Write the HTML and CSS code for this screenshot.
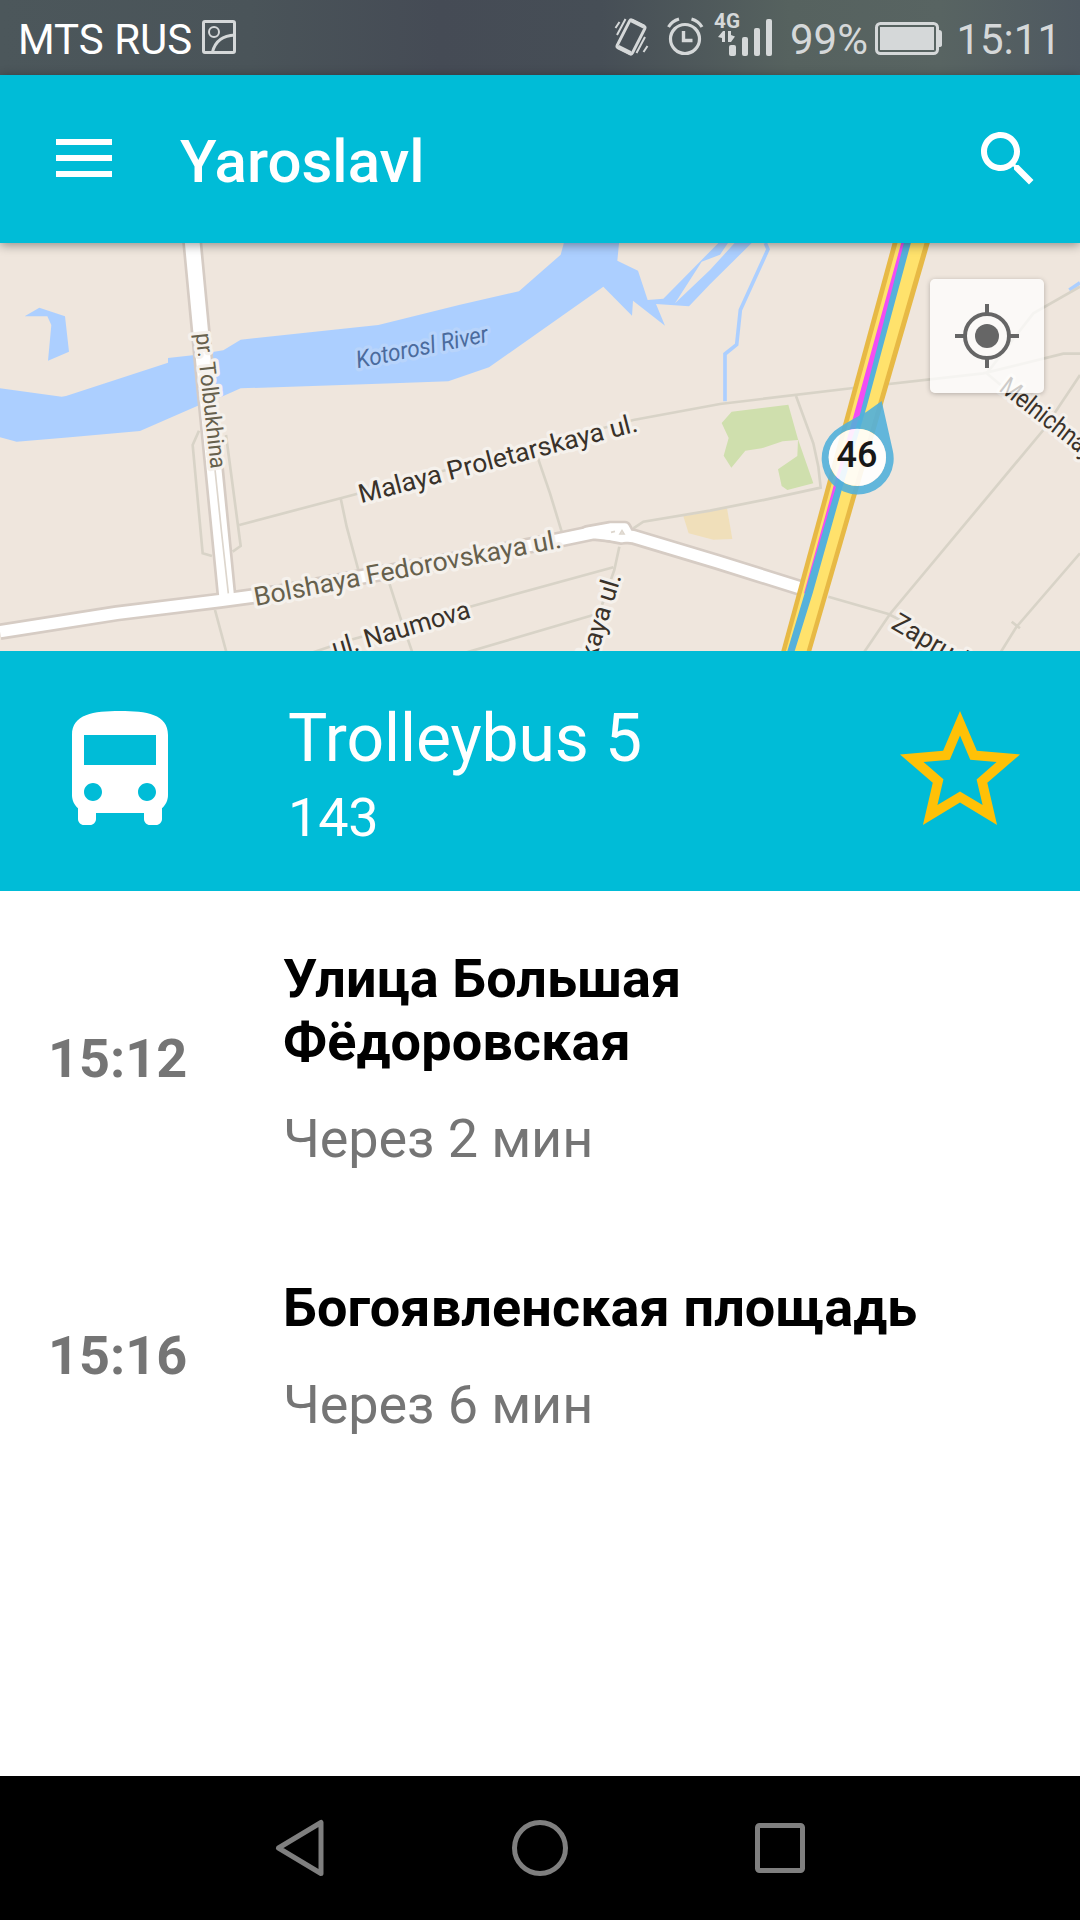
FILE: index.html
```html
<!DOCTYPE html>
<html lang="ru">
<head>
<meta charset="utf-8">
<title>Yaroslavl</title>
<link rel="stylesheet" href="styles.css">
</head>
<body>
<div class="status-bar">
  <span class="carrier">MTS RUS</span>
  <svg class="picture-icon" width="34" height="34" viewBox="0 0 34 34" fill="none" stroke="currentColor">
    <rect x="1.500" y="1.500" width="31" height="31" rx="1.500" stroke-width="3"/>
    <circle cx="12" cy="12" r="5" stroke-width="2"/>
    <path d="M10.500 32C13 22 20 15.500 33 15" stroke-width="3"/>
  </svg>
  <svg class="status-icons" width="176" height="75" viewBox="0 0 176 75" fill="none" stroke="currentColor">
    <g transform="rotate(27 17 37)">
      <rect x="8.500" y="21.500" width="17" height="31" rx="2" stroke-width="3"/>
      <path d="M10 22h14M10 51.500h14" stroke-width="4"/>
    </g>
    <path d="M11.500 19 3 35M5.500 22l-4 6M31 37l-8.500 16M33.500 46l-4 6" stroke-width="2"/>
    <circle cx="71" cy="39" r="14.500" stroke-width="3.200"/>
    <path d="M69.500 31v9.500h9" stroke-width="3.400"/>
    <path d="M54.500 27Q58 21 65 19M77.500 19Q84.500 21 88 27" stroke-width="3.200"/>
    <g fill="currentColor" stroke="none">
      <text class="network" x="100" y="28" textLength="26" lengthAdjust="spacingAndGlyphs">4G</text>
      <path d="M104 37l5-6h2v11h-3v-4zM114 31h3v4l4 1.500-4 5.500h-3z"/>
      <rect x="115" y="45" width="7" height="11" rx="2"/>
      <rect x="128" y="37" width="6" height="19" rx="2"/>
      <rect x="140" y="28" width="6" height="28" rx="2"/>
      <rect x="152" y="19" width="6" height="37" rx="2"/>
    </g>
  </svg>
  <span class="battery-level">99%</span>
  <svg class="battery-icon" width="68" height="34" viewBox="0 0 68 34">
    <rect x="1.500" y="1.500" width="61" height="30" rx="4" fill="none" stroke="currentColor" stroke-width="3"/>
    <path d="M5 5h54v23H5zM64 8q3 0 3 3v12q0 2-3 2z" fill="currentColor"/>
  </svg>
  <span class="clock">15:11</span>
</div>

<header class="app-bar">
  <svg class="menu-icon" width="56" height="38" viewBox="0 0 56 38"><path d="M0 0h56v6H0zM0 16h56v6H0zM0 32h56v6H0z" fill="#fff"/></svg>
  <h1 class="app-title">Yaroslavl</h1>
  <svg class="search-icon" width="72" height="72" viewBox="0 0 24 24"><path fill="#fff" d="M15.500 14h-.79l-.28-.27C15.410 12.590 16 11.110 16 9.500 16 5.910 13.090 3 9.500 3S3 5.910 3 9.500 5.910 16 9.500 16c1.610 0 3.090-.59 4.230-1.570l.27.28v.79l5 4.990L20.490 19l-4.990-5zm-6 0C7.010 14 5 11.990 5 9.500S7.010 5 9.500 5 14 7.010 14 9.500 11.990 14 9.500 14z"/></svg>
</header>

<main>
<section class="map">
  <svg class="map-canvas" viewBox="0 9 3240 1224" width="1080" height="408">
    <!-- water -->
    <g class="water">
      <path d="M0 445 185 470 198 468 504 368V354L578 346 670 331 722 299 1050 264 1135 255 1380 194 1557 154 1682 44 1694 0H1858L1852 62 1914 92 1943 180 1990 176 2164 0H2264L2130 133 2067 199 1968 192 1995 257 1899 182 1896 227 1810 140 1467 382 1345 424 1180 430 722 445 670 468 590 499 420 573 210 592 50 605 0 592Z"/>
      <path d="M74 229 118 203 195 229 207 335 144 362 154 255 142 229Z"/>
    </g>
    <path class="land" d="M2025 190 2105 65 2160 44 2190 0H2212L2130 90Z"/>
    <path class="stream" d="M2296 9 2304 28 2221 210 2210 314 2175 342V484"/>
    <path class="stream" d="M3208 150 3240 128"/>
    <!-- parks and buildings -->
    <path class="park" d="M2195 515 2365 494 2394 598 2440 730 2362 750 2345 738 2334 688 2392 648 2394 600 2348 604 2285 625 2236 632 2194 683 2171 647 2186 594 2165 549Z"/>
    <path class="building" d="M2050 829 2181 805 2197 897 2140 899 2066 880Z"/>
    <!-- side streets -->
    <g class="street">
      <path d="M597 572 578 615 608 940 636 948M678 585 722 918 698 935M718 855 1050 767 1900 540 2160 492 2560 444 2950 400 3190 341H3240"/>
      <path d="M1022 775 1040 860 1075 990M1614 655 1650 760 1685 875M645 1110 680 1240M1168 1030 1200 1130 1238 1240"/>
      <path d="M930 1240 1050 1200 1410 1100 1840 982M1390 1240 1780 1125M1858 920 1843 990 1790 1140"/>
      <path d="M2388 468 2440 610 2455 680 2462 743 2300 778 2130 812 1930 845 1900 865"/>
      <path d="M2485 1070 2665 1122 2740 1160M2590 1240 2670 1122 3130 570 3240 405M3000 1240 3050 1160 3240 940M3035 1145 3060 1165"/>
      <path d="M2960 400 3100 220 3240 140M2960 400 3020 450 3240 600"/>
    </g>
    <!-- main streets -->
    <g class="avenue-edge">
      <path d="M0 1175 350 1120 660 1082 820 1060 1650 905 1780 878 1900 890 2150 965 2415 1048"/>
      <path class="wide" d="M576 0 612 380 681 1080"/>
      <path class="narrow" d="M1760 875 1830 862H1875L1890 890 1865 895Z"/>
    </g>
    <g class="avenue">
      <path d="M0 1175 350 1120 660 1082 820 1060 1650 905 1780 878 1900 890 2150 965 2415 1048"/>
      <path class="wide" d="M576 0 612 380 681 1080"/>
      <path class="narrow" d="M1760 875 1830 862H1875L1890 890 1865 895Z"/>
    </g>
    <path class="median" d="M642 660 665 880 685 1060M1833 877l12-3M1860 882l6-10 6 10z"/>
    <!-- highway with route lines -->
    <path fill="#e7b945" d="M2680 0H2792L2432 1240H2342Z"/>
    <path fill="#ffe26c" d="M2695 0H2776L2418 1240H2356Z"/>
    <path fill="#f34df3" d="M2706 0H2718L2585 520 2418 1060H2412L2500 740 2560 530Z"/>
    <path fill="#55b1db" d="M2714 0H2735L2600 500 2528 740 2438 1060 2382 1240H2360L2414 1060 2508 740 2578 530Z"/>
    <!-- labels -->
    <g class="labels">
      <text class="muted" font-size="68" transform="translate(587 281) rotate(83.600)" textLength="409" lengthAdjust="spacingAndGlyphs">pr. Tolbukhina</text>
      <text class="muted" transform="translate(767 1098) rotate(-10.800)" textLength="937" lengthAdjust="spacingAndGlyphs">Bolshaya Fedorovskaya ul.</text>
      <text transform="translate(1083 790) rotate(-14.600)" textLength="862" lengthAdjust="spacingAndGlyphs">Malaya Proletarskaya ul.</text>
      <text transform="translate(1004 1252) rotate(-16.200)" textLength="429" lengthAdjust="spacingAndGlyphs">ul. Naumova</text>
      <text transform="translate(1787 1262) rotate(-73)" textLength="264" lengthAdjust="spacingAndGlyphs">kaya ul.</text>
      <text class="river" transform="translate(1073 385) rotate(-11.500)" textLength="403" lengthAdjust="spacingAndGlyphs">Kotorosl River</text>
      <text transform="translate(2994 450) rotate(38)" textLength="462" lengthAdjust="spacingAndGlyphs">Melnichnaya ul.</text>
      <text transform="translate(2670 1163) rotate(30)">Zaprudnaya ul.</text>
    </g>
    <!-- vehicle marker -->
    <path fill="#52b0da" fill-opacity=".9" fill-rule="evenodd" d="M2645 483 2678 630A108 108 0 1 1 2519 562Q2535 550 2600 515ZM2572 566a86 86 0 1 0 .1 0z"/>
    <circle cx="2572" cy="652" r="86" fill="#fff" fill-opacity=".9"/>
    <text class="marker-label" x="2571" y="682">46</text>
  </svg>
  <button class="locate" aria-label="Locate">
    <svg width="64" height="64" viewBox="0 0 64 64"><g fill="none" stroke="#666" stroke-width="4"><circle cx="32" cy="32" r="22"/><path d="M32 0v9M32 55v9M0 32h9M55 32h9"/></g><circle cx="32" cy="32" r="12" fill="#666"/></svg>
  </button>
</section>

<section class="vehicle">
  <svg width="144" height="144" viewBox="0 0 24 24"><path fill="#fff" d="M4 16c0 .88.39 1.670 1 2.220V20c0 .55.45 1 1 1h1c.55 0 1-.45 1-1v-1h8v1c0 .55.45 1 1 1h1c.55 0 1-.45 1-1v-1.780c.61-.55 1-1.340 1-2.220V6c0-3.500-3.580-4-8-4s-8 .5-8 4v10zm3.500 1c-.83 0-1.500-.67-1.500-1.500S6.670 14 7.500 14s1.500.67 1.500 1.500S8.330 17 7.500 17zm9 0c-.83 0-1.500-.67-1.500-1.500s.67-1.500 1.500-1.500 1.500.67 1.500 1.500-.67 1.500-1.500 1.500zm1.500-6H6V6h12v5z"/></svg>
  <div class="vehicle-text">
    <div class="route">Trolleybus 5</div>
    <div class="number">143</div>
  </div>
  <svg width="144" height="144" viewBox="0 0 24 24"><path fill="#ffc107" d="M22 9.240l-7.190-.62L12 2 9.190 8.630 2 9.240l5.460 4.730L5.820 21 12 17.270 18.180 21l-1.630-7.030L22 9.240zM12 15.400l-3.760 2.270 1-4.280-3.320-2.880 4.380-.38L12 6.100l1.710 4.040 4.380.38-3.320 2.880 1 4.280L12 15.400z"/></svg>
</section>

<ul class="stops">
  <li class="stop">
    <time class="stop-time">15:12</time>
    <div class="stop-text">
      <div class="stop-name">Улица Большая Фёдоровская</div>
      <div class="stop-eta">Через 2 мин</div>
    </div>
  </li>
  <li class="stop">
    <time class="stop-time">15:16</time>
    <div class="stop-text">
      <div class="stop-name">Богоявленская площадь</div>
      <div class="stop-eta">Через 6 мин</div>
    </div>
  </li>
</ul>
</main>

<nav class="nav-bar">
  <svg width="50" height="64" viewBox="0 0 50 64"><path d="M46 6.500v51L3.500 32Z"/></svg>
  <svg width="58" height="64" viewBox="0 0 58 64"><circle cx="29" cy="32" r="25.500"/></svg>
  <svg width="50" height="64" viewBox="0 0 50 64"><rect x="2.500" y="9.500" width="45" height="45" rx="2"/></svg>
</nav>
</body>
</html>
```

FILE: styles.css
```css
* { box-sizing: border-box; }

body {
  margin: 0;
  width: 1080px;
  height: 1920px;
  display: flex;
  flex-direction: column;
  overflow: hidden;
  background: #fff;
  font-family: Roboto, sans-serif;
}

svg { display: block; flex: none; }

.status-bar {
  height: 75px;
  flex: none;
  display: flex;
  align-items: center;
  padding: 0 19px 0 18px;
  background: linear-gradient(90deg, #4c575b 0, #4a5459 250px, #454b55 440px, #464e56 600px, #56625f 790px, #586462 940px, #4f5961 1080px);
  color: #d5d8d9;
  font-size: 42px;
  white-space: nowrap;
}

.carrier { flex: none; width: 184px; color: #fff; padding-top: 3px; }
.picture-icon { margin: 0 378px 1px 0; }
.network { font-size: 20px; font-weight: 700; }
.battery-level { flex: none; width: 85px; padding-top: 3px; }
.battery-icon { margin-top: 2px; }
.clock { margin-left: auto; padding-top: 3px; }

.app-bar {
  position: relative;
  z-index: 1;
  height: 168px;
  flex: none;
  display: flex;
  align-items: center;
  padding: 0 36px 0 56px;
  background: #00bcd7;
  box-shadow: 0 2px 10px rgba(0, 0, 0, .4);
}

.menu-icon { margin-bottom: 2px; }

.app-title {
  margin: 4px 0 0 68px;
  color: #fff;
  font-size: 60px;
  font-weight: 500;
}

.search-icon { margin-left: auto; }

main {
  flex: 1;
  display: flex;
  flex-direction: column;
}

.map {
  position: relative;
  height: 408px;
  flex: none;
  overflow: hidden;
  background: #efe6dd;
}

.water { fill: #accfff; }
.land { fill: #efe6dd; }
.stream { fill: none; stroke: #accfff; stroke-width: 11; }
.park { fill: #cfdfad; }
.building { fill: #f0dfba; }
.street { fill: none; stroke: #d8d3c7; stroke-width: 8; }
.avenue, .avenue-edge { fill: none; stroke-linejoin: round; }
.avenue-edge { stroke: #d6ccc4; stroke-width: 50; }
.avenue { stroke: #fff; stroke-width: 34; }
.avenue-edge .wide { stroke-width: 60; }
.avenue .wide { stroke-width: 44; }
.avenue-edge .narrow { stroke-width: 40; }
.avenue .narrow { fill: #fff; stroke-width: 24; }
.median { fill: none; stroke: #ddd6cd; stroke-width: 5; }

.labels {
  fill: #39322a;
  stroke: #f5f1ec;
  stroke-width: 20px;
  stroke-linejoin: round;
  paint-order: stroke;
  font-size: 78px;
}
.labels .muted { fill: #66604c; }
.labels .river { fill: #4b6b9d; stroke: #b8d4fb; font-size: 72px; font-style: italic; }
.marker-label { fill: #171717; font-size: 108px; font-weight: 500; text-anchor: middle; }

.locate {
  position: absolute;
  top: 36px;
  right: 36px;
  width: 114px;
  height: 114px;
  display: grid;
  place-items: center;
  padding: 0;
  border: 0;
  border-radius: 5px;
  background: rgba(255, 255, 255, .75);
  box-shadow: 0 1px 5px rgba(0, 0, 0, .25);
}

.vehicle {
  height: 240px;
  flex: none;
  display: flex;
  align-items: center;
  padding: 0 48px;
  background: #00bcd7;
  color: #fff;
}

.vehicle-text {
  flex: 1;
  margin-left: 96px;
  padding-top: 6px;
}

.route { font-size: 66px; line-height: 78px; letter-spacing: -.1px; }
.number { margin-top: 8px; font-size: 54px; line-height: 63px; letter-spacing: -.2px; }

.stops {
  margin: 0;
  padding: 56px 48px 0;
  display: flex;
  flex-direction: column;
  gap: 106px;
  list-style: none;
  font-size: 54px;
  line-height: 63px;
}

.stop { display: flex; align-items: center; }
.stop-time { width: 235px; padding-bottom: 1px; color: #757575; font-weight: 700; }
.stop-text { width: 660px; }
.stop-name { max-width: 640px; color: #000; font-weight: 700; letter-spacing: .1px; }
.stop:first-child .stop-name { max-width: 500px; }
.stop-eta { margin-top: 34px; color: #757575; letter-spacing: -.12px; }

.nav-bar {
  height: 144px;
  flex: none;
  display: flex;
  align-items: center;
  justify-content: space-between;
  padding: 0 275px;
  background: #000;
}

.nav-bar svg {
  fill: none;
  stroke: #7f7f7f;
  stroke-width: 5;
  stroke-linejoin: round;
}
```
